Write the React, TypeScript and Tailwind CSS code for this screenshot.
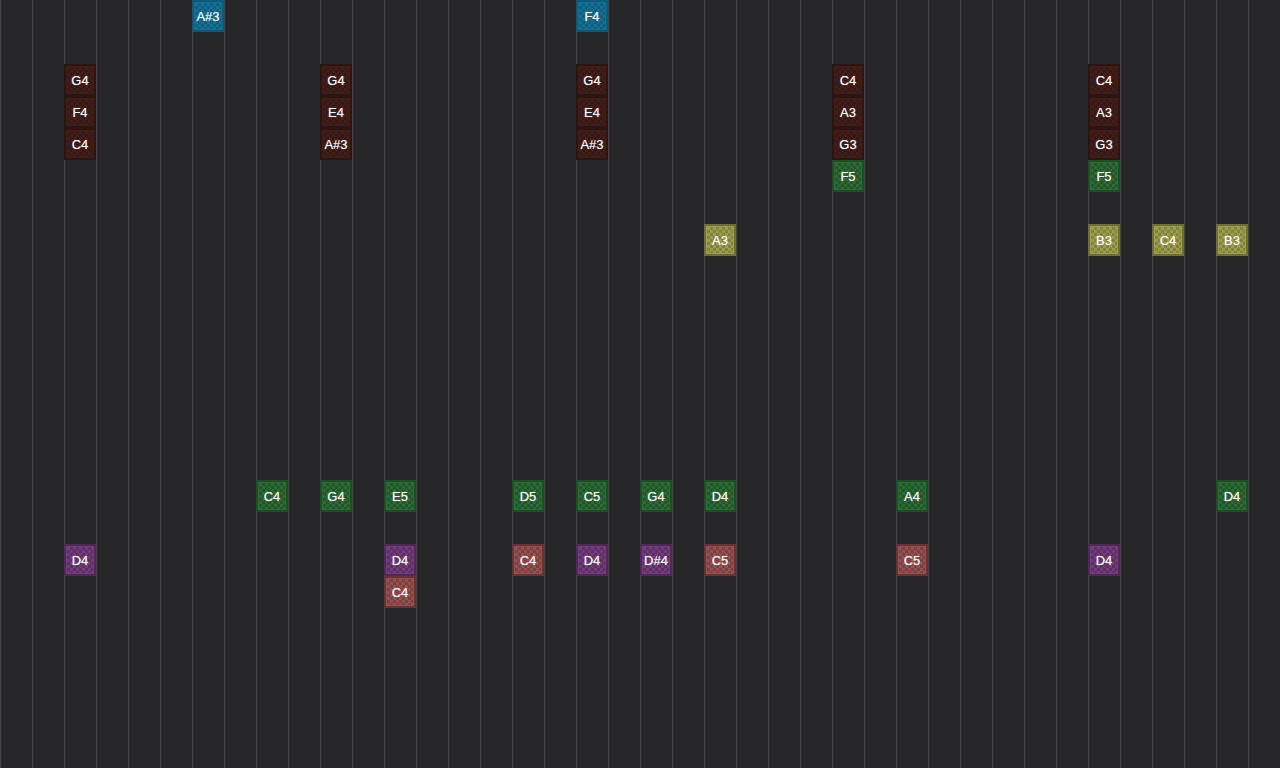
const C = {
  blue: { border: "border-[#0e5a78]", bg: "bg-[#146f92]", dot: "#0f5f80" },
  brown: { border: "border-[#2c1411]", bg: "bg-[#421e1a]", dot: "#361815" },
  green: { border: "border-[#1d4f26]", bg: "bg-[#2b6a34]", dot: "#225529" },
  olive: { border: "border-[#6d7033]", bg: "bg-[#9b9d4c]", dot: "#80833d" },
  purple: { border: "border-[#4f2958]", bg: "bg-[#723c7a]", dot: "#5c3065" },
  red: { border: "border-[#693333]", bg: "bg-[#945050]", dot: "#7b4141" },
};
type K = keyof typeof C;
const notes: [number, number, string, K][] = [
  [192,0,"A#3","blue"],[576,0,"F4","blue"],
  [64,64,"G4","brown"],[64,96,"F4","brown"],[64,128,"C4","brown"],
  [320,64,"G4","brown"],[320,96,"E4","brown"],[320,128,"A#3","brown"],
  [576,64,"G4","brown"],[576,96,"E4","brown"],[576,128,"A#3","brown"],
  [832,64,"C4","brown"],[832,96,"A3","brown"],[832,128,"G3","brown"],[832,160,"F5","green"],
  [1088,64,"C4","brown"],[1088,96,"A3","brown"],[1088,128,"G3","brown"],[1088,160,"F5","green"],
  [704,224,"A3","olive"],[1088,224,"B3","olive"],[1152,224,"C4","olive"],[1216,224,"B3","olive"],
  [256,480,"C4","green"],[320,480,"G4","green"],[384,480,"E5","green"],[512,480,"D5","green"],[576,480,"C5","green"],[640,480,"G4","green"],[704,480,"D4","green"],[896,480,"A4","green"],[1216,480,"D4","green"],
  [64,544,"D4","purple"],[384,544,"D4","purple"],[512,544,"C4","red"],[576,544,"D4","purple"],[640,544,"D#4","purple"],[704,544,"C5","red"],[896,544,"C5","red"],[1088,544,"D4","purple"],
  [384,576,"C4","red"],
];
export default function App() {
  return (
    <div className="relative w-[1280px] h-[768px] overflow-hidden bg-[#272729] bg-[conic-gradient(#29292b_25%,#252527_0_50%,#29292b_0_75%,#252527_0)] bg-size-[2px_2px] font-['Liberation_Sans',sans-serif]">
      <div className="flex h-full">
        {Array.from({ length: 40 }, (_, i) => (
          <div key={i} className="w-8 h-full shrink-0 border-l border-[#48484a]" />
        ))}
      </div>
      {notes.map(([x, y, t, k], i) => {
        const c = C[k];
        return (
          <div
            key={i}
            className={`absolute w-8 h-8 border-2 ${c.border} ${c.bg} p-px`}
            style={{ left: x, top: y }}
          >
            <div
              className="w-full h-full pt-px flex items-center justify-center text-white text-[13px] antialiased [text-shadow:0_0_1px_rgba(255,255,255,0.45)]"
              style={{
                backgroundImage: `conic-gradient(${c.dot} 25%, transparent 0 50%, ${c.dot} 0 75%, transparent 0)`,
                backgroundSize: "6px 6px",
              }}
            >
              {t}
            </div>
          </div>
        );
      })}
    </div>
  );
}
